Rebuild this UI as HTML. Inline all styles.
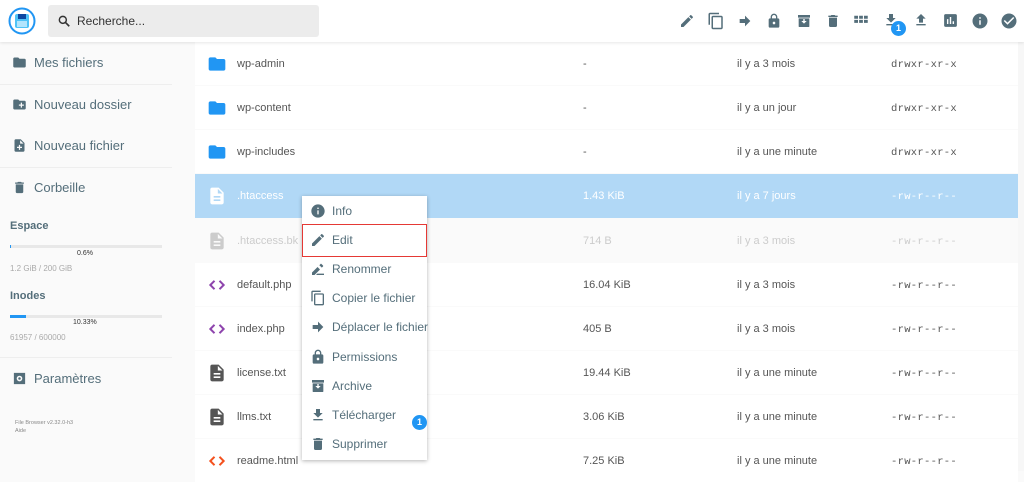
<!DOCTYPE html><html><head><meta charset="utf-8"><style>
*{box-sizing:border-box;margin:0;padding:0}
body{width:1024px;height:471px;overflow:hidden;background:#fafafa;font-family:"Liberation Sans",sans-serif;position:relative;color:#546e7a}
.hdr{position:absolute;left:0;top:0;width:1024px;height:42px;background:#fff;box-shadow:0 1px 3px rgba(0,0,0,.1);z-index:2}
.abs{position:absolute}
.search{left:48px;top:5px;width:271px;height:32px;background:#ececec;border-radius:3px}
.search span{position:absolute;left:29px;top:9px;font-size:12px;color:#333}
.side .it{position:absolute;left:12px;font-size:13px;color:#546e7a;display:flex;align-items:center}
.side .it svg{margin-right:7px}
.sep{position:absolute;left:0;width:172px;height:1px;background:#eee}
.row{position:absolute;left:195px;width:823px;height:43px;background:#fff;font-size:11px;color:#555;white-space:nowrap}
.row span{position:absolute;top:16px}
.row .n{left:42px}.row .s{left:388px}.row .d{left:542px}.row .p{left:696px;top:17px;font-family:"Liberation Mono",monospace;font-size:10.5px;letter-spacing:.3px}
.row svg{position:absolute;left:12px;top:12px}
.menu{left:302px;top:196px;width:125px;height:264px;background:#fff;box-shadow:0 1px 4px rgba(0,0,0,.3);z-index:3}
.mi{position:absolute;left:0;width:125px;height:29px;font-size:12px;color:#546e7a;white-space:nowrap}
.mi svg{position:absolute;left:8px;top:7px}
.mi span{position:absolute;left:30px;top:8px}
.ti svg{fill:#546e7a}
</style></head><body>
<div class="hdr">
<svg class="abs" style="left:8px;top:7px" width="28" height="28" viewBox="0 0 28 28"><circle cx="14" cy="14" r="12.5" fill="#fff" stroke="#2196f3" stroke-width="2"/><rect x="7" y="7" width="14" height="14" rx="2" fill="#4fc3f7"/><rect x="10" y="7" width="8" height="5" fill="#0d47a1"/><rect x="9" y="14" width="10" height="6" fill="#b3e5fc"/></svg>
<div class="abs search"><svg class="abs" style="left:9px;top:9px" width="14" height="14" viewBox="0 0 24 24"><circle cx="10" cy="10" r="6" fill="none" stroke="#333" stroke-width="2.5"/><path d="M14.5 14.5L21 21" stroke="#333" stroke-width="2.8"/></svg><span>Recherche...</span></div>
<div class="ti">
<svg class="abs" style="left:679px;top:13px" width="16" height="16" viewBox="0 0 24 24"><path d="M3 17.25V21h3.75L17.8 9.9l-3.7-3.7L3 17.25zM20.7 7c.4-.4.4-1 0-1.4l-2.3-2.3c-.4-.4-1-.4-1.4 0l-1.8 1.8 3.7 3.7L20.7 7z"/></svg>
<svg class="abs" style="left:707px;top:12px" width="18" height="18" viewBox="0 0 24 24"><path d="M16 1H4c-1.1 0-2 .9-2 2v14h2V3h12V1zm3 4H8c-1.1 0-2 .9-2 2v14c0 1.1.9 2 2 2h11c1.1 0 2-.9 2-2V7c0-1.1-.9-2-2-2zm0 16H8V7h11v14z"/></svg>
<svg class="abs" style="left:737px;top:13px" width="16" height="16" viewBox="0 0 24 24"><path d="M12 4v5H4v6h8v5l8-8z"/></svg>
<svg class="abs" style="left:766px;top:12px" width="16" height="18" viewBox="0 0 24 24"><path d="M18 8h-1V6c0-2.8-2.2-5-5-5S7 3.2 7 6v2H6c-1.1 0-2 .9-2 2v10c0 1.1.9 2 2 2h12c1.1 0 2-.9 2-2V10c0-1.1-.9-2-2-2zm-6 9c-1.1 0-2-.9-2-2s.9-2 2-2 2 .9 2 2-.9 2-2 2zM9 8V6c0-1.7 1.3-3 3-3s3 1.3 3 3v2H9z"/></svg>
<svg class="abs" style="left:796px;top:13px" width="16" height="16" viewBox="0 0 24 24"><path d="M3 3h18v4H3zM4 8h16v12c0 .6-.4 1-1 1H5c-.6 0-1-.4-1-1zm4 4l4 4 4-4h-3V9h-2v3z"/></svg>
<svg class="abs" style="left:825px;top:12px" width="16" height="18" viewBox="0 0 24 24"><path d="M6 19c0 1.1.9 2 2 2h8c1.1 0 2-.9 2-2V7H6v12zM19 4h-3.5l-1-1h-5l-1 1H5v2h14V4z"/></svg>
<svg class="abs" style="left:852px;top:12px" width="18" height="18" viewBox="0 0 24 24"><path d="M3 5h5v4H3zM9.5 5h5v4h-5zM16 5h5v4h-5zM3 10.5h5v4H3zM9.5 10.5h5v4h-5zM16 10.5h5v4h-5z"/></svg>
<svg class="abs" style="left:883px;top:12px" width="16" height="16" viewBox="0 0 24 24"><path d="M19 9h-4V3H9v6H5l7 7 7-7zM5 18v2h14v-2H5z"/></svg>
<svg class="abs" style="left:913px;top:12px" width="16" height="16" viewBox="0 0 24 24"><path d="M9 16h6v-6h4l-7-7-7 7h4zm-4 2h14v2H5z"/></svg>
<svg class="abs" style="left:942px;top:12px" width="17" height="17" viewBox="0 0 24 24"><path d="M19 3H5c-1.1 0-2 .9-2 2v14c0 1.1.9 2 2 2h14c1.1 0 2-.9 2-2V5c0-1.1-.9-2-2-2zM9 17H7v-7h2v7zm4 0h-2V7h2v10zm4 0h-2v-4h2v4z"/></svg>
<svg class="abs" style="left:971px;top:12px" width="18" height="18" viewBox="0 0 24 24"><path d="M12 2C6.5 2 2 6.5 2 12s4.5 10 10 10 10-4.5 10-10S17.5 2 12 2zm1 15h-2v-6h2v6zm0-8h-2V7h2v2z"/></svg>
<svg class="abs" style="left:1000px;top:12px" width="18" height="18" viewBox="0 0 24 24"><path d="M12 2C6.5 2 2 6.5 2 12s4.5 10 10 10 10-4.5 10-10S17.5 2 12 2zm-2 15l-5-5 1.4-1.4 3.6 3.6 7.6-7.6L19 8l-9 9z"/></svg>
</div>
<div class="abs" style="left:891px;top:21px;width:15px;height:15px;border-radius:50%;background:#2196f3;color:#fff;font-size:9px;font-weight:bold;text-align:center;line-height:15px">1</div>
</div>

<div class="side">
<div class="it" style="top:55px"><svg width="15" height="15" viewBox="0 0 24 24" fill="#546e7a"><path d="M10 4H4c-1.1 0-2 .9-2 2v12c0 1.1.9 2 2 2h16c1.1 0 2-.9 2-2V8c0-1.1-.9-2-2-2h-8l-2-2z"/></svg>Mes fichiers</div>
<div class="sep" style="top:84px"></div>
<div class="it" style="top:97px"><svg width="15" height="15" viewBox="0 0 24 24" fill="#546e7a"><path d="M20 6h-8l-2-2H4c-1.1 0-2 .9-2 2v12c0 1.1.9 2 2 2h16c1.1 0 2-.9 2-2V8c0-1.1-.9-2-2-2zm-1 8h-3v3h-2v-3h-3v-2h3V9h2v3h3v2z"/></svg>Nouveau dossier</div>
<div class="it" style="top:138px"><svg width="15" height="15" viewBox="0 0 24 24" fill="#546e7a"><path d="M14 2H6c-1.1 0-2 .9-2 2v16c0 1.1.9 2 2 2h12c1.1 0 2-.9 2-2V8l-6-6zm2 14h-3v3h-2v-3H8v-2h3v-3h2v3h3v2zm-3-7V3.5L18.5 9H13z"/></svg>Nouveau fichier</div>
<div class="sep" style="top:167px"></div>
<div class="it" style="top:180px"><svg width="15" height="15" viewBox="0 0 24 24" fill="#546e7a"><path d="M6 19c0 1.1.9 2 2 2h8c1.1 0 2-.9 2-2V7H6v12zM19 4h-3.5l-1-1h-5l-1 1H5v2h14V4z"/></svg>Corbeille</div>
<div class="abs" style="left:10px;top:220px;font-size:11px;font-weight:bold;color:#546e7a">Espace</div>
<div class="abs" style="left:10px;top:245px;width:152px;height:3px;background:#e8e8e8"><div style="width:1px;height:3px;background:#2196f3"></div></div>
<div class="abs" style="left:77px;top:250px;font-size:7px;color:#333">0.6%</div>
<div class="abs" style="left:10px;top:264px;font-size:8px;color:#aaa">1.2 GiB / 200 GiB</div>
<div class="abs" style="left:10px;top:290px;font-size:11px;font-weight:bold;color:#546e7a">Inodes</div>
<div class="abs" style="left:10px;top:315px;width:152px;height:3px;background:#e8e8e8"><div style="width:16px;height:3px;background:#2196f3"></div></div>
<div class="abs" style="left:73px;top:319px;font-size:7px;color:#333">10.33%</div>
<div class="abs" style="left:10px;top:333px;font-size:8px;color:#aaa">61957 / 600000</div>
<div class="sep" style="top:357px"></div>
<div class="it" style="top:371px"><svg width="15" height="15" viewBox="0 0 24 24" fill="#546e7a"><path d="M3 3h18v18H3z"/><circle cx="12" cy="12" r="4.5" fill="#fafafa"/><circle cx="12" cy="12" r="2" fill="#546e7a"/></svg>Paramètres</div>
<div class="abs" style="left:15px;top:419px;font-size:5.5px;color:#888;line-height:8px">File Browser v2.32.0-h3<br>Aide</div>
</div>

<div class="abs" style="left:1018px;top:42px;width:6px;height:429px;background:#f7f7f7"></div>

<div class="row" style="top:42px"><svg width="20" height="20" viewBox="0 0 24 24" fill="#2196f3"><path d="M10 4H4c-1.1 0-2 .9-2 2v12c0 1.1.9 2 2 2h16c1.1 0 2-.9 2-2V8c0-1.1-.9-2-2-2h-8l-2-2z"/></svg><span class="n">wp-admin</span><span class="s">-</span><span class="d">il y a 3 mois</span><span class="p">drwxr-xr-x</span></div>
<div class="row" style="top:86px"><svg width="20" height="20" viewBox="0 0 24 24" fill="#2196f3"><path d="M10 4H4c-1.1 0-2 .9-2 2v12c0 1.1.9 2 2 2h16c1.1 0 2-.9 2-2V8c0-1.1-.9-2-2-2h-8l-2-2z"/></svg><span class="n">wp-content</span><span class="s">-</span><span class="d">il y a un jour</span><span class="p">drwxr-xr-x</span></div>
<div class="row" style="top:130px"><svg width="20" height="20" viewBox="0 0 24 24" fill="#2196f3"><path d="M10 4H4c-1.1 0-2 .9-2 2v12c0 1.1.9 2 2 2h16c1.1 0 2-.9 2-2V8c0-1.1-.9-2-2-2h-8l-2-2z"/></svg><span class="n">wp-includes</span><span class="s">-</span><span class="d">il y a une minute</span><span class="p">drwxr-xr-x</span></div>
<div class="row" style="top:174px;height:44px;background:#b1d8f6;color:#fff"><svg width="20" height="20" viewBox="0 0 24 24" fill="#fff"><path d="M14 2H6c-1.1 0-2 .9-2 2v16c0 1.1.9 2 2 2h12c1.1 0 2-.9 2-2V8l-6-6zm2 16H8v-2h8v2zm0-4H8v-2h8v2zm-3-5V3.5L18.5 9H13z"/></svg><span class="n">.htaccess</span><span class="s">1.43 KiB</span><span class="d">il y a 7 jours</span><span class="p">-rw-r--r--</span></div>
<div class="row" style="top:219px;background:#fafafa;color:#ccc"><svg width="20" height="20" viewBox="0 0 24 24" fill="#ccc"><path d="M14 2H6c-1.1 0-2 .9-2 2v16c0 1.1.9 2 2 2h12c1.1 0 2-.9 2-2V8l-6-6zm2 16H8v-2h8v2zm0-4H8v-2h8v2zm-3-5V3.5L18.5 9H13z"/></svg><span class="n">.htaccess.bk</span><span class="s">714 B</span><span class="d">il y a 3 mois</span><span class="p">-rw-r--r--</span></div>
<div class="row" style="top:263px"><svg width="20" height="20" viewBox="0 0 24 24" fill="none" stroke="#8e44ad" stroke-width="2.4"><path d="M9 7l-5 5 5 5M15 7l5 5-5 5"/></svg><span class="n">default.php</span><span class="s">16.04 KiB</span><span class="d">il y a 3 mois</span><span class="p">-rw-r--r--</span></div>
<div class="row" style="top:307px"><svg width="20" height="20" viewBox="0 0 24 24" fill="none" stroke="#8e44ad" stroke-width="2.4"><path d="M9 7l-5 5 5 5M15 7l5 5-5 5"/></svg><span class="n">index.php</span><span class="s">405 B</span><span class="d">il y a 3 mois</span><span class="p">-rw-r--r--</span></div>
<div class="row" style="top:351px"><svg width="20" height="20" viewBox="0 0 24 24" fill="#555"><path d="M14 2H6c-1.1 0-2 .9-2 2v16c0 1.1.9 2 2 2h12c1.1 0 2-.9 2-2V8l-6-6zm2 16H8v-2h8v2zm0-4H8v-2h8v2zm-3-5V3.5L18.5 9H13z"/></svg><span class="n">license.txt</span><span class="s">19.44 KiB</span><span class="d">il y a une minute</span><span class="p">-rw-r--r--</span></div>
<div class="row" style="top:395px"><svg width="20" height="20" viewBox="0 0 24 24" fill="#555"><path d="M14 2H6c-1.1 0-2 .9-2 2v16c0 1.1.9 2 2 2h12c1.1 0 2-.9 2-2V8l-6-6zm2 16H8v-2h8v2zm0-4H8v-2h8v2zm-3-5V3.5L18.5 9H13z"/></svg><span class="n">llms.txt</span><span class="s">3.06 KiB</span><span class="d">il y a une minute</span><span class="p">-rw-r--r--</span></div>
<div class="row" style="top:439px"><svg width="20" height="20" viewBox="0 0 24 24" fill="none" stroke="#f4511e" stroke-width="2.4"><path d="M9 7l-5 5 5 5M15 7l5 5-5 5"/></svg><span class="n">readme.html</span><span class="s">7.25 KiB</span><span class="d">il y a une minute</span><span class="p">-rw-r--r--</span></div>

<div class="abs menu">
<div class="mi" style="top:0"><svg width="16" height="16" viewBox="0 0 24 24" fill="#546e7a"><path d="M12 2C6.5 2 2 6.5 2 12s4.5 10 10 10 10-4.5 10-10S17.5 2 12 2zm1 15h-2v-6h2v6zm0-8h-2V7h2v2z"/></svg><span>Info</span></div>
<div class="mi" style="top:29px"><svg width="16" height="16" viewBox="0 0 24 24" fill="#546e7a"><path d="M3 17.25V21h3.75L17.8 9.9l-3.7-3.7L3 17.25zM20.7 7c.4-.4.4-1 0-1.4l-2.3-2.3c-.4-.4-1-.4-1.4 0l-1.8 1.8 3.7 3.7L20.7 7z"/></svg><span>Edit</span></div>
<div class="mi" style="top:58px"><svg width="16" height="16" viewBox="0 0 24 24" fill="#546e7a"><path d="M3 17.25V21h3.75L15 12.7l-3.7-3.7L3 17.25zM17.7 10l-3.7-3.7 1.8-1.8c.4-.4 1-.4 1.4 0l2.3 2.3c.4.4.4 1 0 1.4zM11 19h10v2H9z"/></svg><span>Renommer</span></div>
<div class="mi" style="top:87px"><svg width="16" height="16" viewBox="0 0 24 24" fill="#546e7a"><path d="M16 1H4c-1.1 0-2 .9-2 2v14h2V3h12V1zm3 4H8c-1.1 0-2 .9-2 2v14c0 1.1.9 2 2 2h11c1.1 0 2-.9 2-2V7c0-1.1-.9-2-2-2zm0 16H8V7h11v14z"/></svg><span>Copier le fichier</span></div>
<div class="mi" style="top:116px"><svg width="16" height="16" viewBox="0 0 24 24" fill="#546e7a"><path d="M12 4v5H4v6h8v5l8-8z"/></svg><span>Déplacer le fichier</span></div>
<div class="mi" style="top:146px"><svg width="16" height="16" viewBox="0 0 24 24" fill="#546e7a"><path d="M18 8h-1V6c0-2.8-2.2-5-5-5S7 3.2 7 6v2H6c-1.1 0-2 .9-2 2v10c0 1.1.9 2 2 2h12c1.1 0 2-.9 2-2V10c0-1.1-.9-2-2-2zm-6 9c-1.1 0-2-.9-2-2s.9-2 2-2 2 .9 2 2-.9 2-2 2zM9 8V6c0-1.7 1.3-3 3-3s3 1.3 3 3v2H9z"/></svg><span>Permissions</span></div>
<div class="mi" style="top:175px"><svg width="16" height="16" viewBox="0 0 24 24" fill="#546e7a"><path d="M3 3h18v4H3zM4 8h16v12c0 .6-.4 1-1 1H5c-.6 0-1-.4-1-1zm4 4l4 4 4-4h-3V9h-2v3z"/></svg><span>Archive</span></div>
<div class="mi" style="top:204px"><svg width="16" height="16" viewBox="0 0 24 24" fill="#546e7a"><path d="M19 9h-4V3H9v6H5l7 7 7-7zM5 18v2h14v-2H5z"/></svg><span>Télécharger</span></div>
<div class="mi" style="top:233px"><svg width="16" height="16" viewBox="0 0 24 24" fill="#546e7a"><path d="M6 19c0 1.1.9 2 2 2h8c1.1 0 2-.9 2-2V7H6v12zM19 4h-3.5l-1-1h-5l-1 1H5v2h14V4z"/></svg><span>Supprimer</span></div>
<div class="abs" style="left:110px;top:219px;width:15px;height:15px;border-radius:50%;background:#2196f3;color:#fff;font-size:9px;font-weight:bold;text-align:center;line-height:15px">1</div>
</div>
<div class="abs" style="left:302px;top:224px;width:125px;height:33px;border:1.5px solid #e53935;z-index:4"></div>
</body></html>
